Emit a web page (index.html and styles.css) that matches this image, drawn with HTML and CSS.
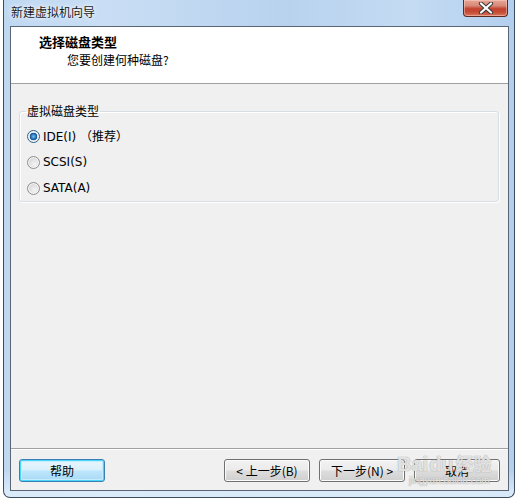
FILE: index.html
```html
<!DOCTYPE html>
<html lang="zh-CN">
<head>
<meta charset="utf-8">
<title>新建虚拟机向导</title>
<link rel="stylesheet" href="styles.css">
</head>
<body>
<div class="window">
  <div class="titlebar">
    <span class="title">新建虚拟机向导</span>
    <div class="close">
      <svg width="16" height="12" viewBox="0 0 16 12">
        <path d="M3 1.5 L13 10.5 M13 1.5 L3 10.5" stroke="#3a3a3a" stroke-width="4.2" stroke-linecap="round"/>
        <path d="M3 1.5 L13 10.5 M13 1.5 L3 10.5" stroke="#ffffff" stroke-width="2.2" stroke-linecap="round"/>
      </svg>
    </div>
  </div>
  <div class="content">
    <div class="header">
      <div class="heading">选择磁盘类型</div>
      <div class="subtitle">您要创建何种磁盘?</div>
    </div>
    <div class="main">
      <fieldset class="group">
        <legend class="legend">虚拟磁盘类型</legend>
        <div class="row"><span class="radio checked"></span><span class="opt">IDE(I) <span class="cjk">（推荐）</span></span></div>
        <div class="row"><span class="radio"></span><span class="opt">SCSI(S)</span></div>
        <div class="row"><span class="radio"></span><span class="opt">SATA(A)</span></div>
      </fieldset>
    </div>
    <div class="footer">
      <button class="btn default">帮助</button>
      <button class="btn back">&lt; 上一步(B)</button>
      <button class="btn">下一步(N) &gt;</button>
      <button class="btn">取消</button>
      <div class="watermark">
        <div class="wm-logo"><span>Bai</span><span class="paw">du</span><span class="wm-cn">经验</span></div>
        <div class="wm-url">jingyan.baidu.com</div>
      </div>
    </div>
  </div>
</div>
</body>
</html>
```

FILE: styles.css
```css
html, body {
  margin: 0;
  padding: 0;
  background: #ffffff;
}

body {
  font-family: "Noto Sans CJK SC", "DejaVu Sans", sans-serif;
  font-size: 12px;
  color: #000;
  width: 518px;
  height: 504px;
  overflow: hidden;
}

.window {
  box-sizing: border-box;
  margin-left: 3px;
  width: 512px;
  height: 498px;
  border: 1px solid #3e4c5c;
  border-top: none;
  border-radius: 0 0 7px 7px;
  padding: 0 5px 6px 6px;
  display: flex;
  flex-direction: column;
  background:
    linear-gradient(to bottom, rgba(255,255,255,0) 0, rgba(255,255,255,0) 470px, rgba(220,236,250,0.9) 492px),
    linear-gradient(to right, #bfd8f2 0, #c9def4 20%, #b8d2ee 55%, #c4dbf3 80%, #b3cfee 100%);
}

.titlebar {
  height: 26px;
  display: flex;
  justify-content: space-between;
  align-items: flex-start;
}

.title {
  padding-left: 1px;
  padding-top: 4px;
  line-height: 16px;
  font-size: 12px;
  color: #1a1a1a;
  text-shadow: 0 0 6px rgba(255,255,255,0.9), 0 0 3px rgba(255,255,255,0.9);
}

.close {
  box-sizing: border-box;
  width: 45px;
  height: 17px;
  margin-right: 1px;
  border: 1px solid #5c2a22;
  border-top: none;
  border-radius: 0 0 4px 4px;
  background: linear-gradient(to bottom, #e7a595 0, #d98a79 35%, #c2422e 55%, #c64b34 75%, #d9775c 100%);
  box-shadow: inset 0 0 0 1px rgba(255,220,210,0.45);
  display: flex;
  align-items: center;
  justify-content: center;
}

.close svg {
  display: block;
}

.content {
  box-sizing: border-box;
  height: 465px;
  border: 1px solid #5b6675;
  background: #f0f0f0;
  display: flex;
  flex-direction: column;
}

.header {
  box-sizing: border-box;
  height: 57px;
  background: #ffffff;
  border-bottom: 1px solid #a0a0a0;
  padding: 7px 0 0 28px;
}

.heading {
  font-weight: bold;
  font-size: 13px;
  line-height: 16px;
}

.subtitle {
  margin-top: 2px;
  padding-left: 28px;
  line-height: 16px;
  font-size: 12px;
}

.main {
  flex: 1;
  display: flex;
  flex-direction: column;
}

.group {
  margin: 19px 9px 0 8px;
  padding: 7px 6px 3px 6px;
  border: 1px solid #d5dfe5;
  border-radius: 3px;
  box-shadow: inset 1px 1px 0 #ffffff, 1px 1px 0 #ffffff;
  display: flex;
  flex-direction: column;
  gap: 6px;
  min-width: 0;
}

.legend {
  padding: 0 1px;
  line-height: 16px;
  font-size: 12px;
}

.row {
  height: 20px;
  display: flex;
  align-items: center;
}

.radio {
  box-sizing: border-box;
  width: 13px;
  height: 13px;
  margin-left: 1px;
  border-radius: 50%;
  border: 1px solid #8f8f8f;
  background: radial-gradient(circle at 60% 65%, #f4f4f4 0, #dcdcdc 60%, #cacaca 100%);
  box-shadow: inset 0 0 0 1px #f6f6f6;
  flex: none;
}

.radio.checked {
  border-color: #2c628b;
  background: radial-gradient(circle, #7bc1f1 0, #2a79c0 30%, #174f89 45%, #dde6ee 52%, #f3f5f7 100%);
}

.opt {
  margin-left: 3px;
  font-family: "DejaVu Sans", "Noto Sans CJK SC", sans-serif;
  font-size: 12px;
  line-height: 16px;
}

.cjk {
  font-family: "Noto Sans CJK SC", sans-serif;
}

.footer {
  box-sizing: border-box;
  height: 42px;
  border-top: 1px solid #a0a0a0;
  box-shadow: inset 0 1px 0 #ffffff;
  padding: 10px 8px 8px 8px;
  display: flex;
  align-items: flex-start;
  gap: 9px;
  position: relative;
}

.btn {
  box-sizing: border-box;
  width: 86px;
  height: 23px;
  margin: 0;
  padding: 0;
  border: 1px solid #707070;
  border-radius: 3px;
  background: linear-gradient(to bottom, #f2f2f2 0, #ebebeb 48%, #dddddd 52%, #cfcfcf 100%);
  box-shadow: inset 0 0 0 1px #fbfbfb;
  font-family: "Noto Sans CJK SC", "DejaVu Sans", sans-serif;
  font-size: 12px;
  line-height: 16px;
  color: #000;
}

.btn.default {
  border-color: #3c7fb1;
  background: linear-gradient(to bottom, #eaf6fd 0, #d9f0fc 48%, #bee6fd 52%, #a7d9f5 100%);
  box-shadow: inset 0 0 0 1px #48d6fc, inset 0 0 0 2px #c5ecfc;
}

.btn.back {
  margin-left: auto;
}

.watermark {
  position: absolute;
  left: 386px;
  top: 2px;
  white-space: nowrap;
  color: rgba(255,255,255,0.7);
  text-shadow: 0 0 1px rgba(150,150,150,0.7), 0 0 1px rgba(150,150,150,0.7);
  pointer-events: none;
}

.wm-logo {
  display: flex;
  align-items: baseline;
  font-family: "Liberation Sans", sans-serif;
  font-weight: bold;
  font-size: 20px;
  line-height: 24px;
}

.paw {
  margin-left: 1px;
}

.wm-cn {
  margin-left: 2px;
  font-family: "Noto Sans CJK SC", sans-serif;
  font-size: 18px;
  font-weight: bold;
}

.wm-url {
  margin-top: -1px;
  padding-left: 12px;
  font-family: "Liberation Sans", sans-serif;
  font-size: 10px;
  line-height: 12px;
}
```
